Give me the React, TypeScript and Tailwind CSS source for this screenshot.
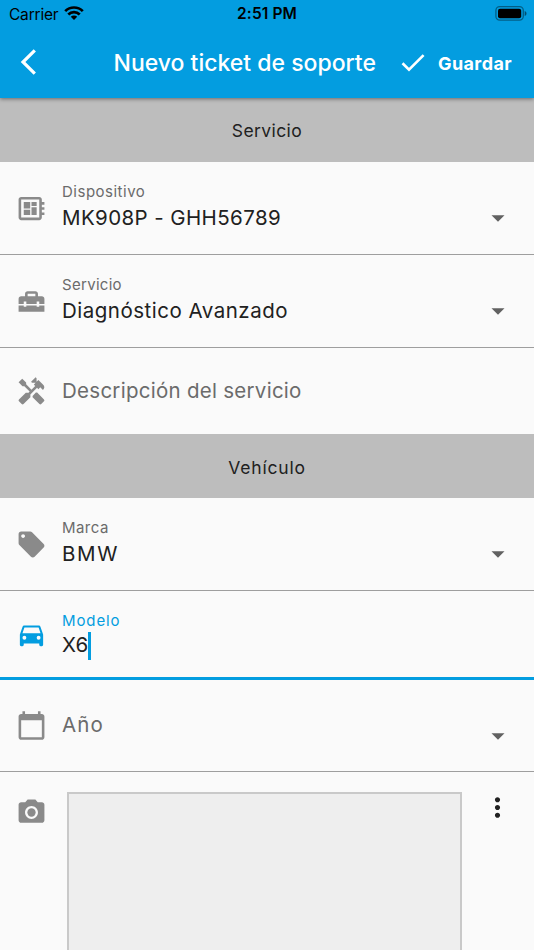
import React from 'react';
import {
  MdCalendarToday,
  MdHandyman,
  MdHomeRepairService,
  MdLocalOffer,
  MdMoreVert,
  MdOutlineDeveloperBoard,
  MdPhotoCamera,
} from 'react-icons/md';

interface FieldProps {
  icon: React.ComponentType<{ className?: string }>;
  label: React.ReactNode;
  value?: React.ReactNode;
  className: string;
  textClass?: string;
  arrowClass?: string;
  focused?: boolean;
}

function CarIcon({ className }: { className?: string }) {
  return (
    <svg className={className} viewBox="0 0 24 24" fill="currentColor">
      <path
        fillRule="evenodd"
        d="M18.920 6.010C18.720 5.420 18.160 5 17.500 5h-11c-.66 0-1.210.42-1.420 1.010L3 12v8c0 .55.45 1 1 1h1c.55 0 1-.45 1-1v-1h12v1c0 .55.45 1 1 1h1c.55 0 1-.45 1-1v-8l-2.080-5.990zM6.500 16a1.500 1.500 0 1 1 0-3 1.500 1.500 0 0 1 0 3zm11 0a1.500 1.500 0 1 1 0-3 1.500 1.500 0 0 1 0 3zM5 11l1.500-4.500h11L19 11H5z"
      />
    </svg>
  );
}

function StatusBar() {
  return (
    <div className="grid h-7 grid-cols-3 items-center pl-[9px] pr-[7px] text-[15.5px] text-black">
      <div className="flex items-center gap-[6px]">
        <span className="pt-px tracking-[-0.2px]">Carrier</span>
        <svg className="-mt-0.5 h-[14px] w-5" viewBox="0 0 20 14" fill="none" stroke="currentColor" strokeWidth="2.7">
          <path d="M1.2 5.1a12.5 12.5 0 0 1 17.6 0" />
          <path d="M4.3 8.5a8 8 0 0 1 11.4 0" />
          <path d="M10 14l-3.2-3.3a4.6 4.6 0 0 1 6.4 0z" fill="currentColor" stroke="none" />
        </svg>
      </div>
      <span className="pr-0.5 text-center font-semibold tracking-[0.1px]">2:51 PM</span>
      <svg className="-mt-0.5 h-[15px] w-8 justify-self-end" viewBox="0 0 32 15">
        <rect x="0.9" y="0.7" width="27.4" height="13.4" rx="3.8" fill="none" stroke="#000" strokeOpacity="0.4" strokeWidth="1.3" />
        <rect x="3" y="2.8" width="23.2" height="9.4" rx="2" fill="#000" />
        <path d="M29.7 5v5c1.2-.5 1.8-1.4 1.8-2.5S30.9 5.500 29.700 5z" fill="#000" fillOpacity="0.5" />
      </svg>
    </div>
  );
}

function AppBar() {
  return (
    <div className="flex h-[70px] items-center pl-5 pr-[22px] text-white">
      <svg className="-mt-0.5 h-[26px] w-[17px]" viewBox="0 0 17 26" fill="none" stroke="currentColor" strokeWidth="3.2">
        <path d="M14.800 1.300 3 13l11.800 11.700" />
      </svg>
      <h1 className="ml-[76.500px] w-[262.500px] whitespace-nowrap text-[23px] font-medium leading-none">
        Nuevo ticket de soporte
      </h1>
      <button className="ml-[25px] flex items-center gap-[13px]">
        <svg className="-mt-px h-[18px] w-6" viewBox="0 0 24 18" fill="none" stroke="currentColor" strokeWidth="2.600">
          <path d="M1.500 9.300 8 15.700 22.600 1.200" />
        </svg>
        <span className="pt-px text-[18px] font-bold leading-none tracking-[0.4px]">Guardar</span>
      </button>
    </div>
  );
}

function Section({ title, className }: { title: string; className: string }) {
  return (
    <div className={`flex h-16 shrink-0 items-center justify-center bg-[#bdbdbd] text-[17.5px] text-[#212121] ${className}`}>
      {title}
    </div>
  );
}

function Field({ icon: Icon, label, value, className, textClass = '', arrowClass, focused }: FieldProps) {
  return (
    <div className={`flex shrink-0 items-center pl-[15.500px] pr-[29.500px] ${className}`}>
      <Icon className={`size-[31px] shrink-0 ${focused ? 'text-[#039de0]' : 'text-[#8a8a8a]'}`} />
      <div className={`ml-[15.500px] flex-1 ${textClass}`}>
        {value ? (
          <>
            <div className={`text-[15px] leading-[19px] ${focused ? 'text-[#039de0]' : 'text-[#6b6b6b]'}`}>{label}</div>
            <div className="flex items-center text-[20.500px] leading-[27px] text-[#212121]">{value}</div>
          </>
        ) : (
          <div className="text-[20.500px] leading-[27px] text-[#6b6b6b]">{label}</div>
        )}
      </div>
      {arrowClass && (
        <svg className={`h-[7px] w-[14px] ${arrowClass}`} viewBox="0 0 14 7" fill="#616161">
          <path d="M.5.200h13L7 6.700z" />
        </svg>
      )}
    </div>
  );
}

function App() {
  return (
    <div className="flex h-[950px] w-[534px] flex-col overflow-hidden bg-[#fafafa] font-['Inter',sans-serif]">
      <header className="z-10 h-[98px] shrink-0 bg-[#039de0] shadow-[0_1px_4px_rgba(0,0,0,0.45)]">
        <StatusBar />
        <AppBar />
      </header>

      <Section title="Servicio" className="pt-0.5 tracking-[0.4px]" />
      <Field
        className="h-[93px] border-b border-[#9e9e9e]"
        icon={MdOutlineDeveloperBoard}
        label={<span className="tracking-[0.5px]">Dispositivo</span>}
        value={<span className="pt-[3px] tracking-[0.4px]">MK908P - GHH56789</span>}
        textClass="-mt-[3px]"
        arrowClass="mt-5"
      />
      <Field
        className="h-[93px] border-b border-[#9e9e9e]"
        icon={MdHomeRepairService}
        label={<span className="tracking-[0.3px]">Servicio</span>}
        value={<span className="pt-[3px] tracking-[0.5px]">Diagnóstico Avanzado</span>}
        textClass="-mt-[3px]"
        arrowClass="mt-5"
      />
      <Field
        className="h-[86px]"
        icon={MdHandyman}
        label={<span className="tracking-[0.270px]">Descripción del servicio</span>}
        textClass="-mt-0.5"
      />

      <Section title="Vehículo" className="pt-1 tracking-[0.8px]" />
      <Field
        className="h-[93px] border-b border-[#9e9e9e]"
        icon={MdLocalOffer}
        label={<span className="tracking-[0.45px]">Marca</span>}
        value={<span className="pt-[3px] tracking-[1.6px]">BMW</span>}
        textClass="-mt-[3px]"
        arrowClass="mt-[21px]"
      />
      <Field
        className="h-[89px] border-b-[3px] border-[#039de0]"
        icon={CarIcon}
        focused
        label={<span className="tracking-[0.9px]">Modelo</span>}
        value={
          <>
            <span className="tracking-[0.1px]">X6</span>
            <span className="mt-0.5 h-7 w-[3px] bg-[#039de0]" />
          </>
        }
        textClass="mt-0.5"
      />
      <Field
        className="h-[92px] border-b border-[#9e9e9e]"
        icon={MdCalendarToday}
        label={<span className="tracking-[1.1px]">Año</span>}
        textClass="-mt-0.5"
        arrowClass="mt-[21px]"
      />

      <div className="flex flex-1 items-start pl-[15.500px] pr-[21px] pt-5">
        <MdPhotoCamera className="mt-[5px] size-[31px] shrink-0 text-[#8a8a8a]" />
        <div className="ml-[20.500px] h-[170px] w-[395px] shrink-0 border-2 border-[#c9c9c9] bg-[#eeeeee]" />
        <MdMoreVert className="ml-auto size-[31px] text-[#212121]" />
      </div>
    </div>
  );
}

export default App;
